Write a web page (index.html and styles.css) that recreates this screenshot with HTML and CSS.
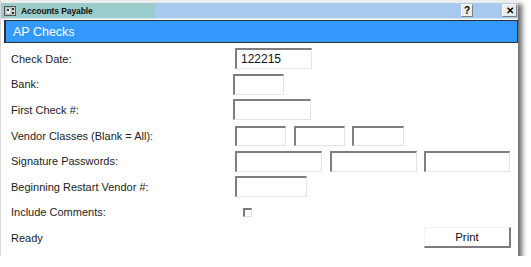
FILE: index.html
```html
<!DOCTYPE html>
<html>
<head>
<meta charset="utf-8">
<link rel="stylesheet" href="styles.css">
</head>
<body>
<div class="window">
  <div class="frame-top"></div>
  <div class="titlebar">
    <svg class="app-icon" width="12" height="10" viewBox="0 0 12 10">
      <rect x="0.5" y="0.5" width="11" height="9" fill="#d8d8d8" stroke="#555"/>
      <rect x="2" y="2" width="5" height="6" fill="#fff" stroke="#777" stroke-width="0.6"/>
      <rect x="3" y="3" width="2" height="2" fill="#333"/>
      <rect x="8" y="2" width="2" height="2" fill="#222"/>
      <rect x="8" y="6" width="2" height="2" fill="#222"/>
    </svg>
    <span class="title">Accounts Payable</span>
    <span class="spacer"></span>
    <span class="tbtn help">?</span>
    <span class="tbtn close">✕</span>
  </div>
  <div class="header">AP Checks</div>
  <div class="form">
    <div class="row">
      <span class="label">Check Date:</span>
      <span class="field w77 val">122215</span>
    </div>
    <div class="row">
      <span class="label">Bank:</span>
      <span class="field w51 left2"></span>
    </div>
    <div class="row">
      <span class="label">First Check #:</span>
      <span class="field w78 left2"></span>
    </div>
    <div class="row">
      <span class="label">Vendor Classes (Blank = All):</span>
      <span class="group g-vendor">
        <span class="field w51"></span>
        <span class="field w51"></span>
        <span class="field w52"></span>
      </span>
    </div>
    <div class="row">
      <span class="label">Signature Passwords:</span>
      <span class="group g-sig">
        <span class="field w87"></span>
        <span class="field w87"></span>
        <span class="field w86"></span>
      </span>
    </div>
    <div class="row">
      <span class="label">Beginning Restart Vendor #:</span>
      <span class="field w72"></span>
    </div>
    <div class="row">
      <span class="label">Include Comments:</span>
      <span class="checkbox"></span>
    </div>
    <div class="row">
      <span class="label">Ready</span>
      <span class="spacer"></span>
      <span class="button">Print</span>
    </div>
  </div>
</div>
</body>
</html>
```

FILE: styles.css
```css
html, body {
  margin: 0;
  padding: 0;
  background: #ffffff;
}

body {
  font-family: "Liberation Sans", Arial, sans-serif;
  color: #1c1c1c;
}

.window {
  width: 518px;
  height: 256px;
  background: #ffffff;
  box-shadow: 4px 4px 5px rgba(0, 0, 0, 0.6);
  border-left: 1px solid #d8d8d8;
  box-sizing: border-box;
  display: flex;
  flex-direction: column;
}

.frame-top {
  height: 3px;
  background: #ececec;
}

.titlebar {
  height: 15px;
  background: linear-gradient(to right, #9acccb 0, #9acccb 154px, #a8c9ee 154px, #a8c9ee 100%);
  border-bottom: 1px solid #d6e4f0;
  display: flex;
  align-items: center;
  padding-left: 3px;
}

.app-icon {
  display: block;
  margin-right: 5px;
}

.title {
  font-size: 8.5px;
  font-weight: bold;
  color: #111;
  letter-spacing: -0.1px;
}

.spacer {
  flex: 1;
}

.tbtn {
  height: 13px;
  background: #ececec;
  border: 1px solid;
  border-color: #fafafa #808080 #808080 #fafafa;
  box-sizing: border-box;
  display: flex;
  align-items: center;
  justify-content: center;
  font-weight: bold;
  color: #000;
}

.help {
  width: 12px;
  font-size: 10px;
  margin-right: 29px;
}

.close {
  width: 15px;
  font-size: 10px;
  margin-right: 1px;
}

.header {
  height: 23px;
  margin: 1px 0 0 3px;
  background: #3399ff;
  border: 1px solid #2f2f2f;
  border-left-width: 2px;
  box-sizing: border-box;
  color: #ffffff;
  font-size: 12.5px;
  display: flex;
  align-items: center;
  padding-left: 7px;
}

.form {
  padding-top: 3px;
  display: flex;
  flex-direction: column;
}

.row {
  height: 25.6px;
  display: flex;
  align-items: center;
}

.label {
  width: 224px;
  padding-left: 10px;
  font-size: 11px;
  flex-shrink: 0;
}

.field {
  height: 21px;
  box-sizing: border-box;
  border-style: solid;
  border-width: 2px 1px 1px 2px;
  border-color: #7e7e7e #e4e4e4 #e4e4e4 #7e7e7e;
  background: #fff;
  display: flex;
  align-items: center;
  font-size: 12px;
  color: #111;
}

.val {
  padding-left: 4px;
}

.left2 {
  margin-left: -2px;
}

.w51 { width: 51px; }
.w52 { width: 52px; }
.w72 { width: 72px; }
.w77 { width: 77px; }
.w78 { width: 78px; }
.w86 { width: 86px; }
.w87 { width: 87px; }

.group {
  display: flex;
}

.g-vendor {
  gap: 7.5px;
  height: 20px;
}

.g-vendor .field {
  height: 20px;
}

.g-sig {
  gap: 7.5px;
}

.checkbox {
  width: 9px;
  height: 9px;
  margin-left: 8px;
  box-sizing: border-box;
  border-style: solid;
  border-width: 2px 1px 1px 2px;
  border-color: #7a7a7a #e0e0e0 #e0e0e0 #7a7a7a;
}

.button {
  width: 87px;
  height: 21px;
  margin-right: 7px;
  box-sizing: border-box;
  border-style: solid;
  border-width: 1px 2px 2px 1px;
  border-color: #f4f4f4 #7c7c7c #7c7c7c #f4f4f4;
  background: #ffffff;
  display: flex;
  align-items: center;
  justify-content: center;
  font-size: 11.5px;
  color: #111;
}
```
